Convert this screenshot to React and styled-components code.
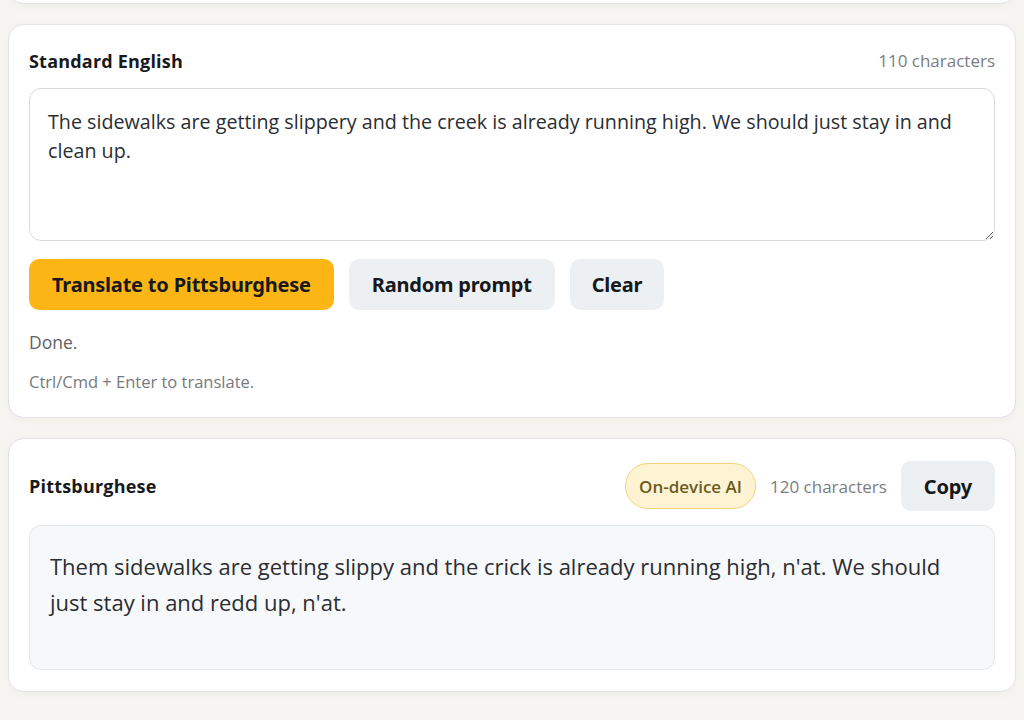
import React from 'react';
import styled, { createGlobalStyle } from 'styled-components';

const GlobalStyle = createGlobalStyle`
  html, body {
    margin: 0;
    padding: 0;
    background: #f6f5f1;
    font-family: 'Open Sans', 'Noto Sans', sans-serif;
    color: #1f2328;
  }
  body {
    height: 720px;
    overflow: hidden;
  }
`;

const Page = styled.main`
  padding: 0 8px;
  display: flex;
  flex-direction: column;
  gap: 20px;
`;

const Card = styled.section`
  background: #fff;
  border: 1px solid #e2e4e8;
  border-radius: 16px;
  box-shadow: 0 2px 8px rgba(60, 50, 20, 0.04);
  padding: ${p => p.$top || 20}px 20px ${p => p.$bottom || 24}px;
  display: flex;
  flex-direction: column;
`;

const StubCard = styled(Card)`
  margin-top: -40px;
  height: 44px;
  padding: 0;
  box-sizing: border-box;
`;

const Header = styled.div`
  display: flex;
  align-items: center;
  justify-content: space-between;
  min-height: ${p => p.$tall ? '50px' : '31px'};
  margin-bottom: ${p => p.$tall ? '14px' : '12px'};
`;

const Label = styled.h2`
  margin: 0;
  font-size: 18px;
  font-weight: 700;
  letter-spacing: 0.2px;
  color: #17191c;
`;

const Meta = styled.div`
  display: flex;
  align-items: center;
  gap: 14px;
`;

const Count = styled.span`
  font-size: 17px;
  color: #7a7d82;
`;

const Input = styled.textarea`
  box-sizing: border-box;
  width: 100%;
  height: 153px;
  margin: 0;
  padding: 18px 18px;
  border: 1.5px solid #d6d9de;
  border-radius: 12px;
  font-family: inherit;
  font-size: 19.7px;
  line-height: 29px;
  color: #2a2d31;
  resize: vertical;
  outline: none;
`;

const Actions = styled.div`
  display: flex;
  gap: 15px;
  margin-top: 18px;
`;

const Button = styled.button`
  height: ${p => p.$h || 51}px;
  padding: 0 ${p => p.$pad || 23}px;
  border: none;
  border-radius: 10px;
  font-family: 'Noto Sans', sans-serif;
  font-size: 20px;
  font-weight: 700;
  letter-spacing: -0.2px;
  color: #16181c;
  background: ${p => p.$primary ? '#fbb616' : '#edf0f3'};
  cursor: pointer;
`;

const Status = styled.p`
  margin: 20px 0 0;
  font-size: 17.5px;
  color: #5f6267;
`;

const Hint = styled.p`
  margin: 16px 0 0;
  font-size: 16.5px;
  color: #76797e;
`;

const Pill = styled.span`
  display: inline-flex;
  align-items: center;
  box-sizing: border-box;
  height: 46px;
  padding: 0 13px;
  border: 1.5px solid #f2d27e;
  border-radius: 23px;
  background: #fef4d3;
  color: #6b5a22;
  font-size: 17px;
  font-weight: 600;
`;

const Output = styled.div`
  box-sizing: border-box;
  min-height: 145px;
  padding: 22px 20px;
  border: 1px solid #e3e6ea;
  border-radius: 12px;
  background: #f7f8fa;
  font-size: 22px;
  line-height: 36px;
  color: #2b2e32;
`;

export default function App() {
  return (
    <>
      <GlobalStyle />
      <Page>
        <StubCard />
        <Card>
          <Header>
            <Label>Standard English</Label>
            <Count>110 characters</Count>
          </Header>
          <Input
            defaultValue="The sidewalks are getting slippery and the creek is already running high. We should just stay in and clean up."
          />
          <Actions>
            <Button $primary>Translate to Pittsburghese</Button>
            <Button>Random prompt</Button>
            <Button $pad={22}>Clear</Button>
          </Actions>
          <Status>Done.</Status>
          <Hint>Ctrl/Cmd + Enter to translate.</Hint>
        </Card>
        <Card $top={22} $bottom={21}>
          <Header $tall>
            <Label>Pittsburghese</Label>
            <Meta>
              <Pill>On-device AI</Pill>
              <Count>120 characters</Count>
              <Button $h={50} $pad={23}>Copy</Button>
            </Meta>
          </Header>
          <Output>
            Them sidewalks are getting slippy and the crick is already running high, n'at. We should just stay in and redd up, n'at.
          </Output>
        </Card>
      </Page>
    </>
  );
}
